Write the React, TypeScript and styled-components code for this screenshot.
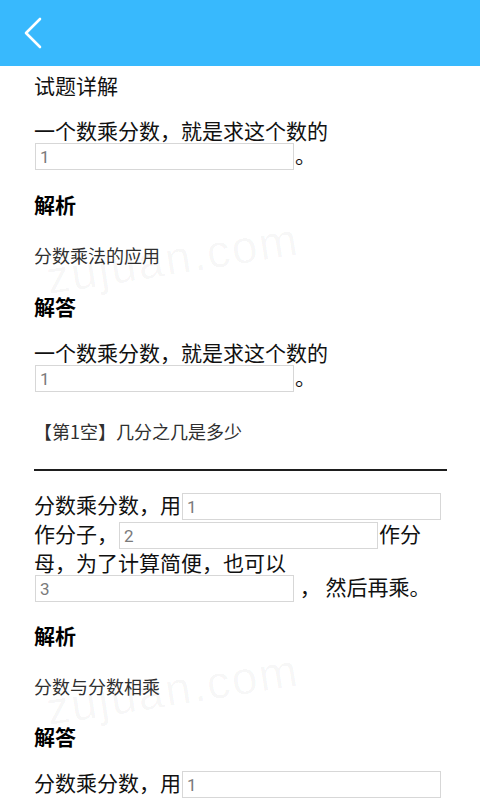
import styled, { createGlobalStyle } from "styled-components";

const GlobalStyle = createGlobalStyle`
  * {
    box-sizing: border-box;
  }
  body {
    margin: 0;
    background: #ffffff;
    font-family: "Noto Sans CJK SC", "Noto Sans", sans-serif;
    color: #111111;
  }
`;

const Page = styled.div`
  width: 480px;
  min-height: 800px;
  overflow: hidden;
`;

const Header = styled.header`
  height: 66px;
  background: #38b9fd;
  display: flex;
  align-items: center;
  padding-left: 22px;
`;

const BackButton = styled.button`
  width: 22px;
  height: 32px;
  padding: 0;
  border: none;
  background: transparent;
  display: flex;
  align-items: center;
  justify-content: center;
`;

const Content = styled.main`
  padding: 0 33px 0 34px;
`;

const Title = styled.div`
  margin-top: 7px;
  font-size: 21px;
  line-height: 24px;
`;

type GapProps = { $gap: number };

const Para = styled.p<GapProps>`
  margin: ${(p) => p.$gap}px 0 0;
  font-size: 21px;
  line-height: 24px;
  color: #111111;
`;

const Heading = styled.h3<GapProps>`
  margin: ${(p) => p.$gap}px 0 0;
  font-size: 21px;
  line-height: 24px;
  font-weight: 700;
  color: #000000;
`;

const Note = styled.div<GapProps>`
  position: relative;
  margin-top: ${(p) => p.$gap}px;
  font-size: 18px;
  line-height: 24px;
  color: #2f2f2f;
`;

const NoteText = styled.span`
  position: relative;
  z-index: 1;
`;

const Watermark = styled.span`
  position: absolute;
  left: 16px;
  top: 12px;
  font-family: "Liberation Sans", Arial, sans-serif;
  font-size: 46px;
  line-height: 46px;
  letter-spacing: 2px;
  color: rgba(0, 0, 0, 0.035);
  transform: rotate(-9deg);
  transform-origin: left bottom;
  white-space: nowrap;
  pointer-events: none;
`;

const Blank = styled.input`
  width: 259px;
  height: 27px;
  margin: 1px;
  padding: 0 4px;
  vertical-align: top;
  border: 1px solid #d7d7d7;
  border-radius: 0;
  background: #ffffff;
  font-family: "Roboto", "Liberation Sans", sans-serif;
  font-size: 17px;
  color: #7a7a7a;
  outline: none;
`;

const Divider = styled.hr`
  margin: 26px 0 0;
  border: none;
  height: 2px;
  background: #1e1e1e;
`;

function Back() {
  return (
    <BackButton aria-label="返回">
      <svg width="20" height="32" viewBox="0 0 20 32">
        <polyline
          points="17,2 3,16 17,30"
          fill="none"
          stroke="#ffffff"
          strokeWidth="2.6"
          strokeLinecap="round"
          strokeLinejoin="round"
        />
      </svg>
    </BackButton>
  );
}

function App() {
  return (
    <Page>
      <GlobalStyle />
      <Header>
        <Back />
      </Header>
      <Content>
        <Title>试题详解</Title>
        <Para $gap={21}>
          一个数乘分数，就是求这个数的
          <Blank defaultValue="1" readOnly />。
        </Para>

        <Heading $gap={21}>解析</Heading>
        <Note $gap={27}>
          <Watermark>zujuan.com</Watermark>
          <NoteText>分数乘法的应用</NoteText>
        </Note>

        <Heading $gap={27}>解答</Heading>
        <Para $gap={22}>
          一个数乘分数，就是求这个数的
          <Blank defaultValue="1" readOnly />。
        </Para>

        <Note $gap={26}>
          <NoteText>【第1空】几分之几是多少</NoteText>
        </Note>

        <Divider />

        <Para $gap={21}>
          分数乘分数，用<Blank defaultValue="1" readOnly />作分子，
          <Blank defaultValue="2" readOnly />作分母，为了计算简便，也可以
          <Blank defaultValue="3" readOnly /> ， 然后再乘。
        </Para>

        <Heading $gap={20}>解析</Heading>
        <Note $gap={27}>
          <Watermark>zujuan.com</Watermark>
          <NoteText>分数与分数相乘</NoteText>
        </Note>

        <Heading $gap={26}>解答</Heading>
        <Para $gap={22}>
          分数乘分数，用<Blank defaultValue="1" readOnly />作分子，
          <Blank defaultValue="2" readOnly />作分母，为了计算简便，也可以
          <Blank defaultValue="3" readOnly /> ， 然后再乘。
        </Para>
      </Content>
    </Page>
  );
}

export default App;
